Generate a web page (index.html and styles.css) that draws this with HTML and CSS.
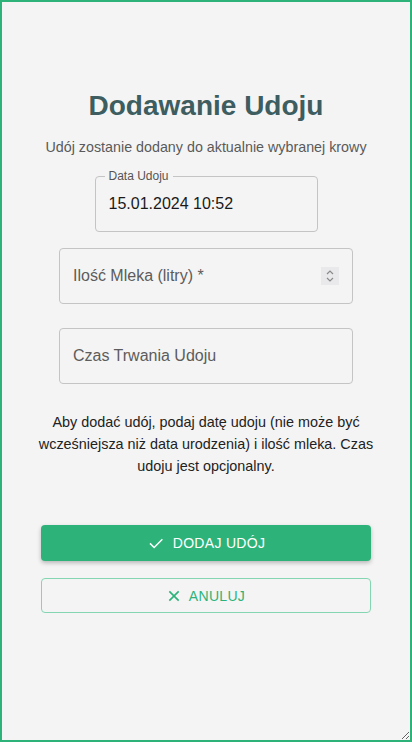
FILE: index.html
```html
<!DOCTYPE html>
<html lang="pl">
<head>
<meta charset="utf-8">
<title>Dodawanie Udoju</title>
<link rel="stylesheet" href="styles.css">
</head>
<body>
<div class="frame">
  <h1 class="title">Dodawanie Udoju</h1>
  <p class="subtitle">Udój zostanie dodany do aktualnie wybranej krowy</p>

  <div class="field field-date">
    <span class="legend">Data Udoju</span>
    <span class="value">15.01.2024 10:52</span>
  </div>

  <div class="field field-wide field-milk">
    <span class="placeholder">Ilość Mleka (litry) *</span>
    <span class="spinner">
      <svg width="10" height="14" viewBox="0 0 10 14"><path d="M2 5 L5 2 L8 5" fill="none" stroke="#8a8a8a" stroke-width="1.2"/><path d="M2 9 L5 12 L8 9" fill="none" stroke="#8a8a8a" stroke-width="1.2"/></svg>
    </span>
  </div>

  <div class="field field-wide field-last">
    <span class="placeholder">Czas Trwania Udoju</span>
  </div>

  <p class="info">Aby dodać udój, podaj datę udoju (nie może być wcześniejsza niż data urodzenia) i ilość mleka. Czas udoju jest opcjonalny.</p>

  <button class="btn btn-primary">
    <svg width="18" height="18" viewBox="0 0 24 24"><path d="M4 12.5 L9.5 18 L20.5 7" fill="none" stroke="#fff" stroke-width="2"/></svg>
    <span>DODAJ UDÓJ</span>
  </button>
  <button class="btn btn-outline">
    <svg width="14" height="14" viewBox="0 0 24 24"><path d="M4 4 L20 20 M20 4 L4 20" fill="none" stroke="#2db37a" stroke-width="2.8"/></svg>
    <span>ANULUJ</span>
  </button>
</div>
</body>
</html>
```
FILE: styles.css
```css
html, body {
  margin: 0;
  padding: 0;
}
body {
  font-family: "Liberation Sans", Arial, sans-serif;
  background: #f4f4f4;
}
.frame {
  box-sizing: border-box;
  width: 412px;
  height: 742px;
  border: 2px solid #2db37a;
  background: #f4f4f4;
  display: flex;
  flex-direction: column;
  align-items: center;
  padding-top: 87px;
  resize: both;
  overflow: hidden;
}
.title {
  margin: 0;
  font-size: 28px;
  line-height: 34px;
  font-weight: bold;
  color: #3d5d60;
}
.subtitle {
  margin: 15px 0 0;
  font-size: 14.3px;
  line-height: 18px;
  color: #5a5a5a;
}
.field {
  box-sizing: border-box;
  border: 1px solid #c4c4c4;
  border-radius: 4px;
  display: flex;
  align-items: center;
  position: relative;
}
.field-date {
  width: 223px;
  height: 56px;
  margin-top: 20px;
  padding: 0 13px;
}
.legend {
  position: absolute;
  left: 9px;
  top: -8px;
  font-size: 12px;
  line-height: 14px;
  color: #555;
  padding: 0 4px;
  background: #f4f4f4;
}
.value {
  font-size: 16px;
  color: #1a1a1a;
}
.field-wide {
  width: 294px;
  height: 56px;
  padding: 0 13px;
  justify-content: space-between;
}
.field-milk {
  margin-top: 16px;
}
.field-last {
  margin-top: 24px;
}
.placeholder {
  font-size: 16px;
  color: #5c5c5c;
}
.spinner {
  width: 18px;
  height: 18px;
  background: #e9e9ec;
  display: flex;
  align-items: center;
  justify-content: center;
}
.info {
  margin: 27px 0 0;
  width: 340px;
  text-align: center;
  font-size: 14.4px;
  line-height: 22px;
  color: #222;
}
.btn {
  box-sizing: border-box;
  width: 330px;
  height: 36px;
  border-radius: 4px;
  font-family: "Liberation Sans", Arial, sans-serif;
  font-size: 14px;
  letter-spacing: 0.3px;
  display: flex;
  align-items: center;
  justify-content: center;
  gap: 8px;
  cursor: pointer;
}
.btn-primary {
  margin-top: 48px;
  background: #2db37a;
  color: #fff;
  border: none;
  box-shadow: 0 2px 4px rgba(0,0,0,0.25);
}
.btn-outline {
  margin-top: 17px;
  height: 35px;
  background: transparent;
  color: #2db37a;
  border: 1px solid #84d6b2;
}
```
